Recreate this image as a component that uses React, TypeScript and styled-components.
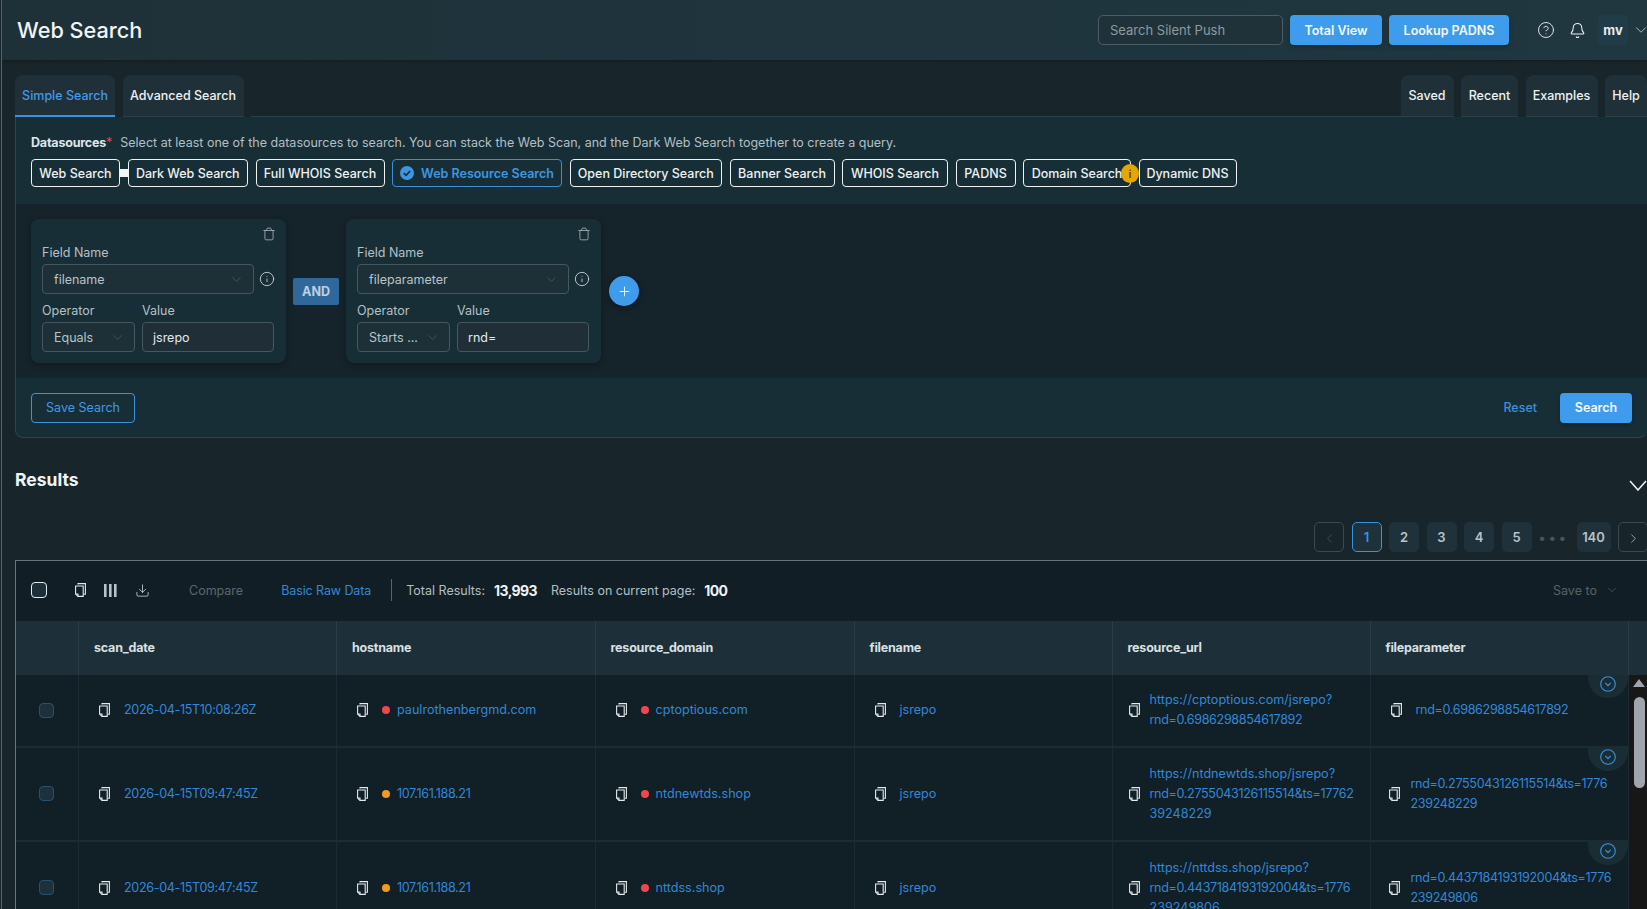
import React from "react";
import styled, { createGlobalStyle } from "styled-components";
import { Bell, ChevronDown, ChevronLeft, ChevronRight, CircleHelp, Download, Info, Plus, Trash } from "lucide-react";

const GlobalStyle = createGlobalStyle`
  html, body {
    margin: 0;
    padding: 0;
    height: 100%;
    overflow: hidden;
    background: #18262c;
  }
  * {
    box-sizing: border-box;
  }
  body {
    font-family: Inter, "Noto Sans", sans-serif;
    font-size: 13px;
    color: #e8edef;
  }
`;

const Page = styled.div`
  height: 909px;
  overflow: hidden;
  margin-left: 1px;
  border-left: 1px solid #55646b;
  background: #18262c;
  display: flex;
  flex-direction: column;
`;

const TopBar = styled.header`
  flex: none;
  height: 60px;
  padding: 0 0 0 15px;
  display: flex;
  align-items: center;
  background: linear-gradient(90deg, #1e3139, #203740);
  box-shadow: 0 1px 3px rgba(0, 0, 0, 0.3);
`;

const Title = styled.h1`
  margin: 0 auto 0 0;
  font-size: 21.7px;
  font-weight: 500;
  color: #f1f4f5;
`;

const TopSearch = styled.div`
  width: 185px;
  height: 30px;
  padding-left: 11px;
  display: flex;
  align-items: center;
  border: 1px solid #4a5d66;
  border-radius: 5px;
  background: #1f323a;
  color: #8d9aa0;
  font-size: 13px;
`;

const PrimaryButton = styled.button<{ $w: number }>`
  width: ${({ $w }) => $w}px;
  height: 30px;
  padding: 0;
  border: 0;
  border-radius: 4px;
  background: #3f9cec;
  color: #f4f8fb;
  font: 600 12.5px Inter, sans-serif;
  box-shadow: 0 2px 5px rgba(0, 0, 0, 0.25);
`;

const TopButtons = styled.div`
  display: flex;
  gap: 7px;
  margin-left: 7px;
`;

const TopIcons = styled.div`
  display: flex;
  align-items: center;
  gap: 14px;
  margin-left: 28px;
  color: #eef2f3;
`;

const Avatar = styled.div`
  width: 30px;
  height: 30px;
  margin-left: 12px;
  display: flex;
  align-items: center;
  justify-content: center;
  border-radius: 4px;
  background: #1f3c48;
  font-weight: 700;
  font-size: 13px;
`;

const AvatarChevron = styled.div`
  width: 19px;
  flex: none;
  padding-left: 4px;
  display: flex;
  color: #b9c3c7;
  svg {
    flex: none;
  }
`;

const TabsRow = styled.nav`
  flex: none;
  height: 42px;
  margin-top: 15px;
  padding-left: 13px;
  display: flex;
  position: relative;
  z-index: 1;
`;

const Tab = styled.div<{ $w: number; $active?: boolean; $last?: boolean }>`
  width: ${({ $w }) => $w}px;
  margin-right: ${({ $last }) => ($last ? 0 : 7.5)}px;
  display: flex;
  align-items: center;
  justify-content: center;
  white-space: nowrap;
  border-radius: 8px 8px 0 0;
  background: #203039;
  font-size: 12.5px;
  font-weight: 500;
  color: ${({ $active }) => ($active ? "#3f9ae8" : "#eef2f3")};
  border-bottom: ${({ $active }) => ($active ? "2px solid #3a93e0" : "1px solid #2b404a")};
`;

const TabSpacer = styled.div`
  flex: 1;
  border-bottom: 1px solid #2b404a;
`;

const SearchPanel = styled.section`
  flex: none;
  height: 321px;
  margin-left: 13px;
  display: flex;
  flex-direction: column;
  background: #182e37;
  border: 1px solid #2d4550;
  border-top: 0;
  border-right: 0;
  border-radius: 0 0 8px 8px;
  overflow: hidden;
`;

const DatasourceSection = styled.div`
  height: 87px;
  flex: none;
  padding: 18px 0 0 15px;
`;

const DatasourceHint = styled.div`
  display: flex;
  align-items: baseline;
  font-size: 12.5px;
  color: #b4bfc4;
`;

const DatasourceLabel = styled.span`
  font-weight: 700;
  letter-spacing: -0.2px;
  color: #dfe5e8;
`;

const Required = styled.span`
  color: #e0474c;
  margin-right: 8px;
`;

const ChipRow = styled.div`
  display: flex;
  margin-top: 9px;
`;

const Chip = styled.div<{ $w: number; $selected?: boolean }>`
  position: relative;
  width: ${({ $w }) => $w}px;
  height: 28px;
  margin-right: 7.5px;
  display: flex;
  align-items: center;
  justify-content: center;
  gap: 7px;
  white-space: nowrap;
  border: 1px solid ${({ $selected }) => ($selected ? "#3a8fd8" : "#eef2f3")};
  border-radius: 4px;
  font-size: 12.5px;
  font-weight: ${({ $selected }) => ($selected ? 600 : 500)};
  color: ${({ $selected }) => ($selected ? "#3e96e2" : "#eef2f3")};
`;

const ChipLink = styled.span`
  position: absolute;
  right: -9px;
  top: 9px;
  width: 8px;
  height: 8px;
  background: #f2f5f6;
`;

const WarnBadge = styled.span`
  position: absolute;
  right: -9px;
  top: 4px;
  width: 18px;
  height: 19px;
  display: flex;
  align-items: center;
  justify-content: center;
  border-radius: 50%;
  background: #e6a600;
  color: #5c4300;
  font-size: 11px;
  font-weight: 600;
`;

const QuerySection = styled.div`
  height: 174px;
  flex: none;
  padding: 15px;
  display: flex;
  align-items: center;
  background: #15232a;
`;

const QueryCard = styled.div`
  width: 255px;
  height: 144px;
  padding: 8px 12px 0 11px;
  flex: none;
  border-radius: 8px;
  background: #182e37;
  box-shadow: 0 2px 6px rgba(0, 0, 0, 0.25);
`;

const CardTop = styled.div`
  display: flex;
  justify-content: flex-end;
  height: 15px;
  margin-right: -2px;
  color: #aab5ba;
`;

const FieldLabel = styled.div`
  height: 20px;
  display: flex;
  align-items: center;
  font-size: 12.5px;
  color: #b4c0c5;
`;

const FieldRow = styled.div`
  display: flex;
  align-items: center;
  margin-top: 2px;
`;

const SelectBox = styled.div<{ $w: number }>`
  width: ${({ $w }) => $w}px;
  height: 30px;
  padding: 0 9px 0 11px;
  flex: none;
  display: flex;
  align-items: center;
  justify-content: space-between;
  border: 1px solid #45575f;
  border-radius: 4px;
  background: #1d2f37;
  font-size: 12.5px;
  color: #b9c4c8;
`;

const ValueBox = styled.div<{ $w: number }>`
  width: ${({ $w }) => $w}px;
  height: 30px;
  margin-left: 7px;
  padding: 0 10px;
  flex: none;
  display: flex;
  align-items: center;
  border: 1px solid #45575f;
  border-radius: 4px;
  background: #202f37;
  font-size: 12.5px;
  color: #e4e9eb;
`;

const DoubleLabels = styled.div`
  display: flex;
  margin-top: 6px;
`;

const OperatorLabel = styled(FieldLabel)`
  width: 100px;
`;

const InfoSlot = styled.span`
  margin-left: 5px;
  display: flex;
  color: #dfe5e8;
`;

const AndBadge = styled.div`
  width: 46px;
  height: 27px;
  margin: 0 7px;
  flex: none;
  display: flex;
  align-items: center;
  justify-content: center;
  border-radius: 2px;
  background: #31689b;
  color: #bdd0e0;
  font-size: 12.5px;
  font-weight: 700;
`;

const AddButton = styled.div`
  width: 30px;
  height: 30px;
  margin-left: 8px;
  flex: none;
  display: flex;
  align-items: center;
  justify-content: center;
  border-radius: 50%;
  background: #3f9cec;
  color: #fff;
  box-shadow: 0 2px 6px rgba(0, 0, 0, 0.35);
`;

const PanelFooter = styled.div`
  flex: 1;
  padding: 0 15px;
  display: flex;
  align-items: center;
  justify-content: space-between;
`;

const OutlineButton = styled.div`
  width: 104px;
  height: 30px;
  display: flex;
  align-items: center;
  justify-content: center;
  border: 1px solid #3a93e0;
  border-radius: 4px;
  color: #3f9ae8;
  font-size: 12.5px;
`;

const FooterActions = styled.div`
  display: flex;
  align-items: center;
  gap: 23px;
`;

const ResetLink = styled.span`
  color: #3f8fd8;
  font-size: 12.5px;
  font-weight: 500;
`;

const ResultsHead = styled.div`
  flex: none;
  height: 84px;
  padding: 25px 0 0 13px;
  display: flex;
  justify-content: space-between;
  color: #f1f4f5;
`;

const ResultsTitle = styled.h2`
  margin: 0;
  font-size: 17.5px;
  line-height: 34px;
  font-weight: 700;
`;

const ResultsChevron = styled.div`
  margin-top: 17px;
  display: flex;
  color: #f1f4f5;
`;

const Pager = styled.div`
  flex: none;
  height: 30px;
  display: flex;
  justify-content: flex-end;
  gap: 7.5px;
  margin-right: -1px;
`;

const PageItem = styled.div<{ $active?: boolean; $w?: number }>`
  width: ${({ $w }) => $w ?? 30}px;
  height: 30px;
  display: flex;
  align-items: center;
  justify-content: center;
  border-radius: 5px;
  background: #1f313a;
  border: 1px solid ${({ $active }) => ($active ? "#3a93e0" : "transparent")};
  color: ${({ $active }) => ($active ? "#3a93e0" : "#b8c2c7")};
  font-size: 13px;
  font-weight: 600;
`;

const PageArrow = styled.div<{ $muted?: boolean }>`
  width: 30px;
  height: 30px;
  padding-top: 3px;
  display: flex;
  align-items: center;
  justify-content: center;
  border: 1px solid #3b4a52;
  border-radius: 5px;
  color: ${({ $muted }) => ($muted ? "#44555e" : "#aeb9be")};
`;

const PageDots = styled.div`
  width: 30px;
  display: flex;
  align-items: center;
  justify-content: center;
  letter-spacing: 3.5px;
  font-size: 14px;
  font-weight: 700;
  color: #46565f;
`;

const TableCard = styled.section`
  flex: 1;
  min-height: 0;
  margin: 8px 0 0 13px;
  border: 1px solid #66747b;
  border-right: 0;
  border-bottom: 0;
  background: #121f26;
  overflow: hidden;
`;

const Toolbar = styled.div`
  height: 60px;
  padding: 0 0 2px 15px;
  display: flex;
  align-items: center;
  background: #121e25;
  font-size: 12.5px;
`;

const ToolCheck = styled.div`
  width: 16px;
  height: 16px;
  border: 1px solid #e7ecee;
  border-radius: 4px;
  background: #1d3039;
`;

const ToolIcons = styled.div`
  display: flex;
  align-items: center;
  gap: 18px;
  margin-left: 28px;
  color: #dde3e6;
`;

const Muted = styled.span`
  margin-left: 39px;
  color: #5a676d;
`;

const BlueLink = styled.span`
  margin-left: 38px;
  letter-spacing: -0.1px;
  color: #3488d8;
`;

const ToolDivider = styled.span`
  width: 1px;
  height: 22px;
  margin: 0 14px 0 20px;
  background: #56646b;
`;

const StatLabel = styled.span`
  color: #b4bfc4;
`;

const StatValue = styled.strong`
  margin: 0 14px 0 9px;
  font-size: 14px;
  font-weight: 700;
  letter-spacing: -0.6px;
  color: #eef2f3;
`;

const SaveTo = styled.div`
  margin-left: auto;
  width: 94px;
  display: flex;
  align-items: center;
  gap: 8px;
  color: #566268;
`;

const GRID = "63px 258px 258.5px 259px 258px 258px 258.5px";

const HeaderRow = styled.div`
  height: 54px;
  display: grid;
  grid-template-columns: ${GRID} 1fr;
  background: #1d2f38;
`;

const HeaderCell = styled.div`
  display: flex;
  align-items: center;
  padding: 0 0 2px 15px;
  border-right: 1px solid #2a3d46;
  font-size: 12.5px;
  font-weight: 700;
  letter-spacing: -0.2px;
  color: #d9e0e3;
  &:last-child {
    border-right: 0;
  }
`;

const TableBody = styled.div`
  display: flex;
  height: 300px;
`;

const Rows = styled.div`
  flex: none;
  width: 1613px;
`;

const Row = styled.div<{ $h: number }>`
  position: relative;
  height: ${({ $h }) => $h}px;
  display: grid;
  grid-template-columns: ${GRID};
  border-bottom: 2px solid #1c2c34;
  background: #111f26;
`;

const Cell = styled.div<{ $pad?: number; $gap?: number }>`
  display: flex;
  align-items: center;
  padding-left: ${({ $pad }) => $pad ?? 20}px;
  gap: ${({ $gap }) => $gap ?? 14}px;
  border-right: 1px solid #1c2b33;
  color: #3288d8;
  font-size: 12.6px;
  line-height: 20px;
  &:last-child {
    border-right: 0;
  }
`;

const CheckCell = styled(Cell)`
  justify-content: center;
  padding-left: 0;
  padding-right: 1px;
`;

const RowCheck = styled.div`
  width: 15px;
  height: 15px;
  border: 1px solid #2a506c;
  border-radius: 4px;
  background: #1c313b;
`;

const Dot = styled.span<{ $color: string }>`
  width: 8px;
  height: 8px;
  flex: none;
  margin-right: -7px;
  border-radius: 50%;
  background: ${({ $color }) => $color};
`;

// numbers sit tighter than letters in the reference
const Numeric = styled.span`
  letter-spacing: -0.35px;
`;

const Lines = styled.div`
  white-space: nowrap;
`;

const Line = styled.div``;

const ExpandTab = styled.div`
  position: absolute;
  top: 0;
  right: 1px;
  width: 40px;
  height: 23px;
  padding-top: 1px;
  display: flex;
  justify-content: center;
  border-radius: 0 0 20px 20px;
  background: #1a2c34;
  color: #3a93e0;
`;

const Scrollbar = styled.div`
  flex: 1;
  height: 300px;
  padding: 4px 4px 0;
  display: flex;
  flex-direction: column;
  align-items: center;
  background: #171717;
`;

const ScrollArrow = styled.div`
  width: 0;
  height: 0;
  border-left: 6px solid transparent;
  border-right: 6px solid transparent;
  border-bottom: 8px solid #a0a5ad;
`;

const ScrollThumb = styled.div`
  width: 11px;
  height: 91px;
  margin-top: 10px;
  border-radius: 6px;
  background: #a0a5ad;
`;

function CopyIcon() {
  return (
    <svg width="11" height="14" viewBox="0 0 11 14" fill="none" stroke="#e4e9eb" strokeWidth="1.1" style={{ flex: "none" }}>
      <path d="M3 1.5V.6h7.4v10.6H8.6" />
      <path d="M.6 3h7.6v10.4H3L.6 11V3Z" />
      <path d="M.6 11H3v2.4" />
    </svg>
  );
}

function ColumnsIcon() {
  return (
    <svg width="13" height="13" viewBox="0 0 13 13" fill="#b9c2c6">
      <rect x="0" y="0" width="2.6" height="13" />
      <rect x="5" y="0" width="2.6" height="13" />
      <rect x="10" y="0" width="2.6" height="13" />
    </svg>
  );
}

function CheckCircle() {
  return (
    <svg width="14" height="14" viewBox="0 0 14 14">
      <circle cx="7" cy="7" r="7" fill="#3e96e2" />
      <path d="M3.8 7.2 6.1 9.4 10.2 5" fill="none" stroke="#182e37" strokeWidth="1.6" />
    </svg>
  );
}

function ExpandCircle() {
  return (
    <svg width="16" height="16" viewBox="0 0 16 16" fill="none" stroke="currentColor" strokeWidth="1.1">
      <circle cx="8" cy="8" r="7.3" />
      <path d="M5.4 7 8 9.6 10.6 7" />
    </svg>
  );
}

function WideChevron() {
  return (
    <svg width="18" height="11" viewBox="0 0 18 11" fill="none" stroke="currentColor" strokeWidth="1.5">
      <path d="M1 1l8 9 8-9" />
    </svg>
  );
}

type QueryFieldProps = {
  field: string;
  operator: string;
  value: string;
};

function QueryField({ field, operator, value }: QueryFieldProps) {
  return (
    <QueryCard>
      <CardTop>
        <Trash size={14} strokeWidth={1.4} />
      </CardTop>
      <FieldLabel>Field Name</FieldLabel>
      <FieldRow>
        <SelectBox $w={212}>
          {field}
          <ChevronDown size={15} strokeWidth={1} color="#56666e" />
        </SelectBox>
        <InfoSlot>
          <Info size={16} strokeWidth={1.2} />
        </InfoSlot>
      </FieldRow>
      <DoubleLabels>
        <OperatorLabel>Operator</OperatorLabel>
        <FieldLabel>Value</FieldLabel>
      </DoubleLabels>
      <FieldRow>
        <SelectBox $w={93}>
          {operator}
          <ChevronDown size={15} strokeWidth={1} color="#56666e" />
        </SelectBox>
        <ValueBox $w={132}>{value}</ValueBox>
      </FieldRow>
    </QueryCard>
  );
}

const chips = [
  { label: "Web Search", w: 89, link: true },
  { label: "Dark Web Search", w: 120.5 },
  { label: "Full WHOIS Search", w: 129 },
  { label: "Web Resource Search", w: 170, selected: true },
  { label: "Open Directory Search", w: 152.5 },
  { label: "Banner Search", w: 105 },
  { label: "WHOIS Search", w: 106 },
  { label: "PADNS", w: 60 },
  { label: "Domain Search", w: 108, warn: true },
  { label: "Dynamic DNS", w: 98 },
];

const RED = "#f0474c";
const ORANGE = "#f39a1f";

const rows = [
  {
    h: 72.5,
    date: "2026-04-15T10:08:26Z",
    host: "paulrothenbergmd.com",
    hostDot: RED,
    domain: "cptoptious.com",
    url: ["https://cptoptious.com/jsrepo?", "rnd=0.6986298854617892"],
    param: ["rnd=0.6986298854617892"],
  },
  {
    h: 94,
    date: "2026-04-15T09:47:45Z",
    host: "107.161.188.21",
    hostDot: ORANGE,
    domain: "ntdnewtds.shop",
    url: ["https://ntdnewtds.shop/jsrepo?", "rnd=0.2755043126115514&ts=17762", "39248229"],
    param: ["rnd=0.2755043126115514&ts=1776", "239248229"],
  },
  {
    h: 94,
    date: "2026-04-15T09:47:45Z",
    host: "107.161.188.21",
    hostDot: ORANGE,
    domain: "nttdss.shop",
    url: ["https://nttdss.shop/jsrepo?", "rnd=0.4437184193192004&ts=1776", "239249806"],
    param: ["rnd=0.4437184193192004&ts=1776", "239249806"],
  },
];

const columns = ["scan_date", "hostname", "resource_domain", "filename", "resource_url", "fileparameter"];

function App() {
  return (
    <Page>
      <GlobalStyle />
      <TopBar>
        <Title>Web Search</Title>
        <TopSearch>Search Silent Push</TopSearch>
        <TopButtons>
          <PrimaryButton $w={92}>Total View</PrimaryButton>
          <PrimaryButton $w={120}>Lookup PADNS</PrimaryButton>
        </TopButtons>
        <TopIcons>
          <CircleHelp size={18} strokeWidth={1.2} />
          <Bell size={17} strokeWidth={1.5} />
        </TopIcons>
        <Avatar>mv</Avatar>
        <AvatarChevron>
          <ChevronDown size={18} strokeWidth={1.2} />
        </AvatarChevron>
      </TopBar>

      <TabsRow>
        <Tab $w={100} $active>Simple Search</Tab>
        <Tab $w={121}>Advanced Search</Tab>
        <TabSpacer />
        <Tab $w={53}>Saved</Tab>
        <Tab $w={57}>Recent</Tab>
        <Tab $w={72}>Examples</Tab>
        <Tab $w={42} $last>Help</Tab>
      </TabsRow>

      <SearchPanel>
        <DatasourceSection>
          <DatasourceHint>
            <DatasourceLabel>Datasources</DatasourceLabel>
            <Required>*</Required>
            Select at least one of the datasources to search. You can stack the Web Scan, and the Dark Web Search together to create a query.
          </DatasourceHint>
          <ChipRow>
            {chips.map((chip) => (
              <Chip key={chip.label} $w={chip.w} $selected={chip.selected}>
                {chip.selected && <CheckCircle />}
                {chip.label}
                {chip.link && <ChipLink />}
                {chip.warn && <WarnBadge>i</WarnBadge>}
              </Chip>
            ))}
          </ChipRow>
        </DatasourceSection>

        <QuerySection>
          <QueryField field="filename" operator="Equals" value="jsrepo" />
          <AndBadge>AND</AndBadge>
          <QueryField field="fileparameter" operator="Starts ..." value="rnd=" />
          <AddButton>
            <Plus size={15} strokeWidth={1.4} />
          </AddButton>
        </QuerySection>

        <PanelFooter>
          <OutlineButton>Save Search</OutlineButton>
          <FooterActions>
            <ResetLink>Reset</ResetLink>
            <PrimaryButton $w={72}>Search</PrimaryButton>
          </FooterActions>
        </PanelFooter>
      </SearchPanel>

      <ResultsHead>
        <ResultsTitle>Results</ResultsTitle>
        <ResultsChevron>
          <WideChevron />
        </ResultsChevron>
      </ResultsHead>

      <Pager>
        <PageArrow $muted>
          <ChevronLeft size={15} strokeWidth={1.3} />
        </PageArrow>
        <PageItem $active>1</PageItem>
        <PageItem>2</PageItem>
        <PageItem>3</PageItem>
        <PageItem>4</PageItem>
        <PageItem>5</PageItem>
        <PageDots>•••</PageDots>
        <PageItem $w={34}>140</PageItem>
        <PageArrow>
          <ChevronRight size={15} strokeWidth={1.3} />
        </PageArrow>
      </Pager>

      <TableCard>
        <Toolbar>
          <ToolCheck />
          <ToolIcons>
            <CopyIcon />
            <ColumnsIcon />
            <Download size={15} strokeWidth={1.2} />
          </ToolIcons>
          <Muted>Compare</Muted>
          <BlueLink>Basic Raw Data</BlueLink>
          <ToolDivider />
          <StatLabel>Total Results:</StatLabel>
          <StatValue>13,993</StatValue>
          <StatLabel>Results on current page:</StatLabel>
          <StatValue>100</StatValue>
          <SaveTo>
            Save to
            <ChevronDown size={14} strokeWidth={1.2} />
          </SaveTo>
        </Toolbar>

        <HeaderRow>
          <HeaderCell />
          {columns.map((name) => (
            <HeaderCell key={name}>{name}</HeaderCell>
          ))}
          <HeaderCell />
        </HeaderRow>

        <TableBody>
          <Rows>
            {rows.map((row) => (
              <Row key={row.domain} $h={row.h}>
                <CheckCell>
                  <RowCheck />
                </CheckCell>
                <Cell>
                  <CopyIcon />
                  <Numeric>{row.date}</Numeric>
                </Cell>
                <Cell>
                  <CopyIcon />
                  <Dot $color={row.hostDot} />
                  {row.hostDot === ORANGE ? <Numeric>{row.host}</Numeric> : row.host}
                </Cell>
                <Cell>
                  <CopyIcon />
                  <Dot $color={RED} />
                  {row.domain}
                </Cell>
                <Cell>
                  <CopyIcon />
                  jsrepo
                </Cell>
                <Cell $pad={16} $gap={10}>
                  <CopyIcon />
                  <Lines>
                    {row.url.map((line) => (
                      <Line key={line}>
                        {line.startsWith("rnd") ? <Numeric>{line}</Numeric> : line}
                      </Line>
                    ))}
                  </Lines>
                </Cell>
                <Cell $pad={row.param.length > 1 ? 18 : 20} $gap={row.param.length > 1 ? 11 : 14}>
                  <CopyIcon />
                  <Lines>
                    {row.param.map((line) => (
                      <Line key={line}>
                        <Numeric>{line}</Numeric>
                      </Line>
                    ))}
                  </Lines>
                </Cell>
                <ExpandTab>
                  <ExpandCircle />
                </ExpandTab>
              </Row>
            ))}
          </Rows>
          <Scrollbar>
            <ScrollArrow />
            <ScrollThumb />
          </Scrollbar>
        </TableBody>
      </TableCard>
    </Page>
  );
}

export default App;
